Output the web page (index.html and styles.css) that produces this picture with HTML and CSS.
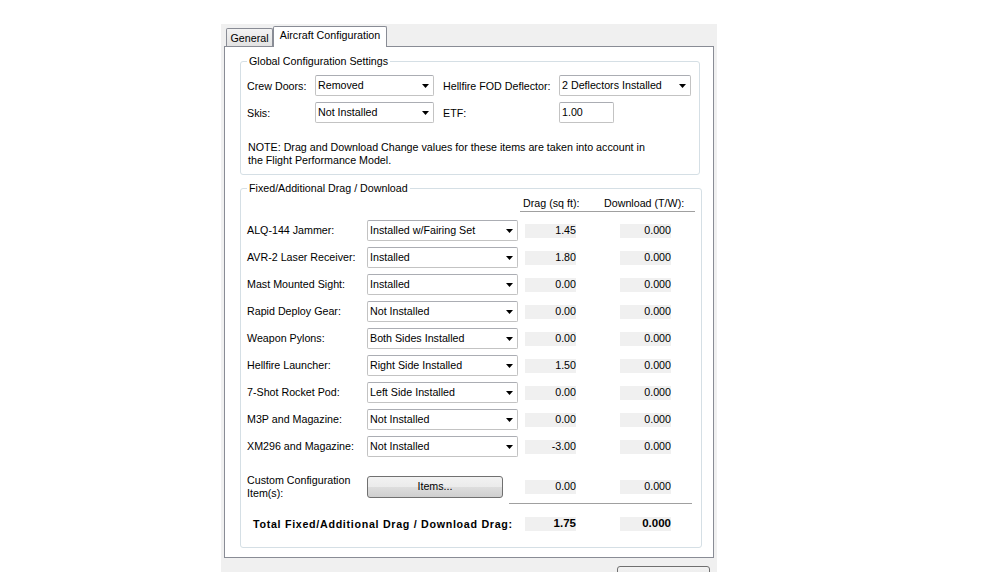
FILE: index.html
```html
<!DOCTYPE html>
<html>
<head>
<meta charset="utf-8">
<link rel="stylesheet" href="styles.css">
</head>
<body>
<div class="window">
  <div class="tabs">
    <div class="tab">General</div>
    <div class="tab active">Aircraft Configuration</div>
  </div>
  <div class="panel">
    <fieldset class="group g1">
      <legend>Global Configuration Settings</legend>
      <div class="frow">
        <span class="lbl-a">Crew Doors:</span>
        <div class="combo w119"><span>Removed</span><svg class="arr" width="7" height="4" viewBox="0 0 7 4"><path d="M0 0H7L3.5 4Z"/></svg></div>
        <span class="lbl-b">Hellfire FOD Deflector:</span>
        <div class="combo w132"><span>2 Deflectors Installed</span><svg class="arr" width="7" height="4" viewBox="0 0 7 4"><path d="M0 0H7L3.5 4Z"/></svg></div>
      </div>
      <div class="frow">
        <span class="lbl-a">Skis:</span>
        <div class="combo w119"><span>Not Installed</span><svg class="arr" width="7" height="4" viewBox="0 0 7 4"><path d="M0 0H7L3.5 4Z"/></svg></div>
        <span class="lbl-b">ETF:</span>
        <div class="textbox">1.00</div>
      </div>
      <p class="note">NOTE: Drag and Download Change values for these items are taken into account in<br>the Flight Performance Model.</p>
    </fieldset>

    <fieldset class="group g2">
      <legend>Fixed/Additional Drag / Download</legend>
      <div class="colhead"><span class="ch1">Drag (sq ft):</span><span>Download (T/W):</span></div>
      <div class="rows">
        <div class="row"><span class="lbl">ALQ-144 Jammer:</span><div class="combo w151"><span>Installed w/Fairing Set</span><svg class="arr" width="7" height="4" viewBox="0 0 7 4"><path d="M0 0H7L3.5 4Z"/></svg></div><span class="val v1">1.45</span><span class="val v2">0.000</span></div>
        <div class="row"><span class="lbl">AVR-2 Laser Receiver:</span><div class="combo w151"><span>Installed</span><svg class="arr" width="7" height="4" viewBox="0 0 7 4"><path d="M0 0H7L3.5 4Z"/></svg></div><span class="val v1">1.80</span><span class="val v2">0.000</span></div>
        <div class="row"><span class="lbl">Mast Mounted Sight:</span><div class="combo w151"><span>Installed</span><svg class="arr" width="7" height="4" viewBox="0 0 7 4"><path d="M0 0H7L3.5 4Z"/></svg></div><span class="val v1">0.00</span><span class="val v2">0.000</span></div>
        <div class="row"><span class="lbl">Rapid Deploy Gear:</span><div class="combo w151"><span>Not Installed</span><svg class="arr" width="7" height="4" viewBox="0 0 7 4"><path d="M0 0H7L3.5 4Z"/></svg></div><span class="val v1">0.00</span><span class="val v2">0.000</span></div>
        <div class="row"><span class="lbl">Weapon Pylons:</span><div class="combo w151"><span>Both Sides Installed</span><svg class="arr" width="7" height="4" viewBox="0 0 7 4"><path d="M0 0H7L3.5 4Z"/></svg></div><span class="val v1">0.00</span><span class="val v2">0.000</span></div>
        <div class="row"><span class="lbl">Hellfire Launcher:</span><div class="combo w151"><span>Right Side Installed</span><svg class="arr" width="7" height="4" viewBox="0 0 7 4"><path d="M0 0H7L3.5 4Z"/></svg></div><span class="val v1">1.50</span><span class="val v2">0.000</span></div>
        <div class="row"><span class="lbl">7-Shot Rocket Pod:</span><div class="combo w151"><span>Left Side Installed</span><svg class="arr" width="7" height="4" viewBox="0 0 7 4"><path d="M0 0H7L3.5 4Z"/></svg></div><span class="val v1">0.00</span><span class="val v2">0.000</span></div>
        <div class="row"><span class="lbl">M3P and Magazine:</span><div class="combo w151"><span>Not Installed</span><svg class="arr" width="7" height="4" viewBox="0 0 7 4"><path d="M0 0H7L3.5 4Z"/></svg></div><span class="val v1">0.00</span><span class="val v2">0.000</span></div>
        <div class="row"><span class="lbl">XM296 and Magazine:</span><div class="combo w151"><span>Not Installed</span><svg class="arr" width="7" height="4" viewBox="0 0 7 4"><path d="M0 0H7L3.5 4Z"/></svg></div><span class="val v1">-3.00</span><span class="val v2">0.000</span></div>
      </div>
      <div class="row custom"><span class="lbl">Custom Configuration<br>Item(s):</span><div class="btn items">Items...</div><span class="val v1b">0.00</span><span class="val v2">0.000</span></div>
      <div class="sep"></div>
      <div class="row total"><span class="total-lbl">Total Fixed/Additional Drag / Download Drag:</span><span class="val">1.75</span><span class="val v2">0.000</span></div>
    </fieldset>
  </div>
  <div class="footer"><div class="btn ok"></div></div>
</div>
</body>
</html>
```
FILE: styles.css
```css
body {
  margin: 0;
  background: #fff;
  font-family: "Liberation Sans", Arial, sans-serif;
  font-size: 10.7px;
  color: #000;
}
.window {
  margin: 24px 0 0 221px;
  width: 496px;
  height: 548px;
  padding: 0 3px;
  box-sizing: border-box;
  background: #f0f0f0;
  display: flex;
  flex-direction: column;
  overflow: hidden;
}
.window > * {
  flex-shrink: 0;
}
.tabs {
  display: flex;
  align-items: flex-end;
  height: 22px;
  padding-left: 2px;
}
.tab {
  box-sizing: border-box;
  width: 47px;
  height: 18px;
  border: 1px solid #898c95;
  border-bottom: 0;
  border-radius: 2px 2px 0 0;
  background: linear-gradient(#f3f3f3, #e2e2e2);
  line-height: 18px;
  text-align: center;
  white-space: nowrap;
}
.tab.active {
  width: 114px;
  height: 21px;
  line-height: 17px;
  background: #fff;
  margin-bottom: -1px;
  position: relative;
  z-index: 1;
}
.panel {
  box-sizing: border-box;
  height: 512px;
  border: 1px solid #898c95;
  background: #fff;
  padding: 8px 13px 0 15px;
}
.group {
  box-sizing: border-box;
  width: 460px;
  margin: 0;
  border: 1px solid #d5dfe5;
  border-radius: 3px;
  padding: 7px 6px 7px 6px;
}
.group legend {
  padding: 0 2px;
  line-height: 13px;
  font-size: 10.7px;
}
.g2 {
  margin-top: 7px;
  padding-top: 2px;
  padding-bottom: 16px;
}
.frow {
  display: flex;
  align-items: center;
  height: 21px;
}
.frow + .frow {
  margin-top: 6px;
}
.lbl-a {
  width: 68px;
}
.lbl-b {
  width: 116px;
  margin-left: 9px;
}
.combo {
  box-sizing: border-box;
  height: 21px;
  border: 1px solid #c3c3c3;
  border-top-color: #abadb3;
  border-radius: 2px;
  background: #fff;
  display: flex;
  align-items: center;
  justify-content: space-between;
  padding: 0 4px 1px 2px;
  white-space: nowrap;
}
.arr {
  display: block;
  fill: #000;
  margin-top: 2px;
}
.w119 { width: 119px; }
.w132 { width: 132px; }
.w151 { width: 151px; }
.textbox {
  box-sizing: border-box;
  width: 55px;
  height: 21px;
  border: 1px solid #c3c3c3;
  border-top-color: #abadb3;
  border-radius: 2px;
  padding: 0 2px;
  line-height: 18px;
}
.note {
  margin: 18px 0 0 1px;
  line-height: 13px;
}
.colhead {
  display: flex;
  margin-left: 273px;
  width: 175px;
  height: 14px;
  line-height: 13px;
  border-bottom: 1px solid #a0a0a0;
  white-space: nowrap;
}
.ch1 {
  width: 81px;
  padding-left: 3px;
}
.rows {
  margin-top: 8px;
  display: flex;
  flex-direction: column;
  gap: 6px;
}
.row {
  display: flex;
  align-items: center;
  height: 21px;
}
.lbl {
  width: 120px;
  line-height: 13px;
  white-space: nowrap;
}
.val {
  width: 51px;
  height: 14px;
  line-height: 13px;
  background: #f0f0f0;
  text-align: right;
  flex-shrink: 0;
}
.v1 { margin-left: 7px; }
.v1b { margin-left: 22px; }
.v2 { margin-left: 44px; }
.custom {
  margin-top: 17px;
  height: 26px;
}
.btn {
  box-sizing: border-box;
  border: 1px solid #707070;
  border-radius: 3px;
  background: linear-gradient(#f2f2f2 0%, #ebebeb 50%, #dddddd 51%, #cfcfcf 100%);
  text-align: center;
}
.items {
  width: 136px;
  height: 22px;
  line-height: 19px;
}
.sep {
  margin: 3px 0 0 262px;
  width: 183px;
  height: 1px;
  background: #a0a0a0;
}
.total {
  margin-top: 13px;
  height: 14px;
  font-weight: bold;
}
.total-lbl {
  box-sizing: border-box;
  width: 278px;
  padding-left: 6px;
  letter-spacing: 0.7px;
  white-space: nowrap;
  flex-shrink: 0;
}
.total .val {
  font-size: 11.5px;
}
.footer {
  display: flex;
  justify-content: flex-end;
  margin-top: 8px;
}
.ok {
  width: 93px;
  height: 23px;
  margin-right: 4px;
}
```
